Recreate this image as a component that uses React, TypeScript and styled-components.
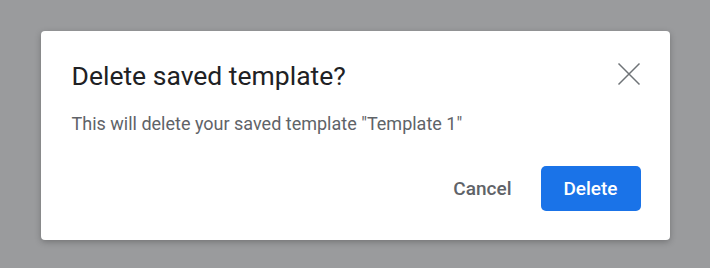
import React from "react";
import styled, { createGlobalStyle } from "styled-components";

const Global = createGlobalStyle`
  html, body { margin: 0; padding: 0; }
  body { font-family: Roboto, "Noto Sans", sans-serif; }
`;

const Overlay = styled.div`
  width: 710px;
  height: 268px;
  background: #9a9b9d;
  display: flex;
  align-items: flex-start;
  justify-content: center;
  padding-top: 31px;
  box-sizing: border-box;
`;

const Dialog = styled.div`
  width: 629px;
  background: #ffffff;
  border-radius: 4px;
  box-shadow: 0 2px 6px rgba(0, 0, 0, 0.25);
  padding: 29px 29px 29px 31px;
  box-sizing: border-box;
  display: flex;
  flex-direction: column;
`;

const Header = styled.div`
  display: flex;
  justify-content: space-between;
  align-items: flex-start;
`;

const Title = styled.h2`
  margin: 0;
  font-family: Roboto, sans-serif;
  font-weight: 400;
  font-size: 26.5px;
  line-height: 32px;
  color: #202124;
`;

const CloseButton = styled.button`
  width: 24px;
  height: 24px;
  margin-top: 2px;
  padding: 0;
  border: none;
  background: none;
  display: flex;
  cursor: pointer;
`;

const Message = styled.p`
  margin: 20px 0 0;
  font-size: 18px;
  line-height: 24px;
  color: #5f6368;
`;

const Actions = styled.div`
  display: flex;
  justify-content: flex-end;
  gap: 7px;
  margin-top: 30px;
`;

const Button = styled.button<{ $primary?: boolean }>`
  height: 45px;
  min-width: 100px;
  padding: 0 22px;
  border: none;
  border-radius: 5px;
  font-family: Roboto, sans-serif;
  font-size: 19px;
  font-weight: 500;
  cursor: pointer;
  background: ${(p) => (p.$primary ? "#1a73e8" : "transparent")};
  color: ${(p) => (p.$primary ? "#ffffff" : "#5f6368")};
`;

export default function App() {
  return (
    <>
      <Global />
      <Overlay>
        <Dialog>
          <Header>
            <Title>Delete saved template?</Title>
            <CloseButton aria-label="Close">
              <svg width="24" height="24" viewBox="0 0 24 24">
                <path d="M1.5 1.5 L22.5 22.5 M22.5 1.5 L1.5 22.5" stroke="#6f7377" strokeWidth="1.5" fill="none" />
              </svg>
            </CloseButton>
          </Header>
          <Message>This will delete your saved template "Template 1"</Message>
          <Actions>
            <Button>Cancel</Button>
            <Button $primary>Delete</Button>
          </Actions>
        </Dialog>
      </Overlay>
    </>
  );
}
